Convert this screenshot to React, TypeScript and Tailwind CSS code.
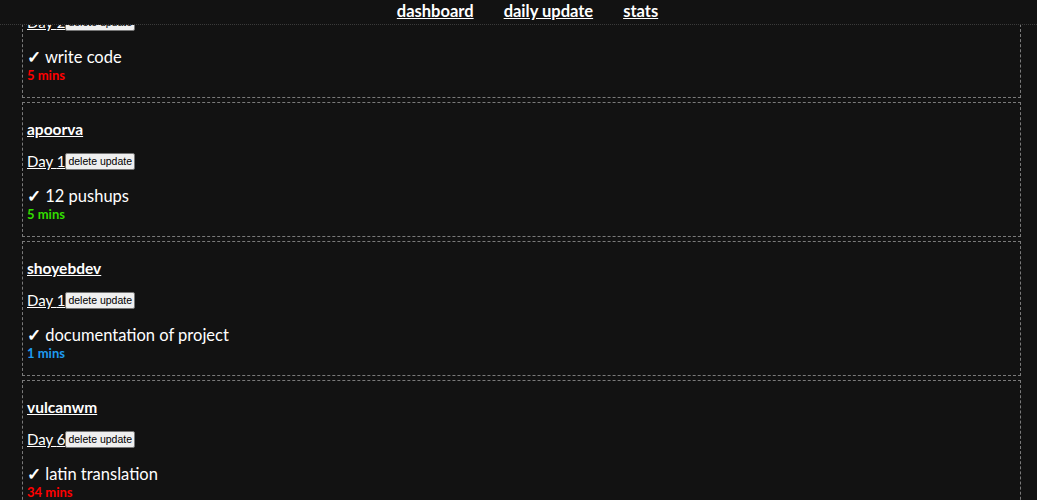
const updates = [
  { user: 'someone', day: 2, task: 'write code', mins: 5, color: 'text-[#ff0000]' },
  { user: 'apoorva', day: 1, task: '12 pushups', mins: 5, color: 'text-[#33dd00]' },
  { user: 'shoyebdev', day: 1, task: 'documentation of project', mins: 1, color: 'text-[#1e9bf0]' },
  { user: 'vulcanwm', day: 6, task: 'latin translation', mins: 34, color: 'text-[#ff0000]' },
];

function UpdateCard({ u }: { u: (typeof updates)[number] }) {
  return (
    <div className="ml-[22px] mr-[16px] mb-[4px] border border-dashed border-[#7a7a7a] px-[4px] pt-[16px] pb-[15px]">
      <div className="h-[20px] text-[15.5px] font-bold underline leading-[20px]">{u.user}</div>
      <div className="mt-[12px] flex items-center h-[20px]">
        <span className="text-[15px] underline leading-[20px]">Day {u.day}</span>
        <button className="h-[17px] rounded-[2px] border border-[#767676] bg-[#efefef] px-[2px] text-[10.5px] leading-[14px] text-black font-['Liberation_Sans',sans-serif]">
          delete update
        </button>
      </div>
      <div className="mt-[14px] h-[22px] text-[16.5px] leading-[22px]">
        <span className="font-bold">✓</span> {u.task}
      </div>
      <div className={`h-[14px] text-[13px] font-bold leading-[14px] ${u.color}`}>{u.mins} mins</div>
    </div>
  );
}

export default function App() {
  return (
    <div className="relative h-[500px] overflow-hidden bg-[#121212] text-white font-['Lato',sans-serif]">
      {/* fixed nav bar over the scrolled list */}
      <div className="absolute inset-x-0 top-0 z-10 flex h-[25px] items-start justify-center gap-[30px] pl-[18px] border-b border-dotted border-[#3a3a3a] bg-[#121212]">
        <a className="text-[16.5px] font-bold underline leading-[22px]">dashboard</a>
        <a className="text-[16.5px] font-bold underline leading-[22px]">daily update</a>
        <a className="text-[16.5px] font-bold underline leading-[22px]">stats</a>
      </div>
      <div className="-mt-[37px]">
        {updates.map((u) => (
          <UpdateCard key={u.user} u={u} />
        ))}
      </div>
    </div>
  );
}
